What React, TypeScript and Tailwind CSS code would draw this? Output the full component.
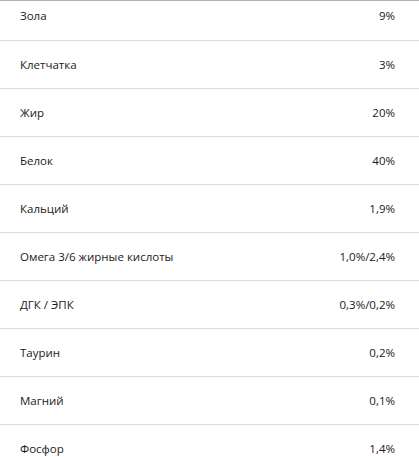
const ROWS = [
  { name: 'Зола', value: '9%' },
  { name: 'Клетчатка', value: '3%' },
  { name: 'Жир', value: '20%' },
  { name: 'Белок', value: '40%' },
  { name: 'Кальций', value: '1,9%' },
  { name: 'Омега 3/6 жирные кислоты', value: '1,0%/2,4%' },
  { name: 'ДГК / ЭПК', value: '0,3%/0,2%' },
  { name: 'Таурин', value: '0,2%' },
  { name: 'Магний', value: '0,1%' },
  { name: 'Фосфор', value: '1,4%' },
]

export default function App() {
  return (
    <div className="w-[419px] h-[457px] overflow-hidden bg-white font-['Open_Sans',sans-serif] text-[11.5px] text-[#1a1a1a]">
      <div className="border-t border-[#b0b0b0]">
        {ROWS.map((row, i) => (
          <div
            key={row.name}
            className={
              i === 0
                ? 'flex items-center justify-between h-[40px] pb-[10px] pl-[20px] pr-[24px] border-b border-[#dcdcdc]'
                : 'flex items-center justify-between h-[48px] pl-[20px] pr-[24px] border-b border-[#dcdcdc]'
            }
          >
            <span>{row.name}</span>
            <span>{row.value}</span>
          </div>
        ))}
      </div>
    </div>
  )
}
